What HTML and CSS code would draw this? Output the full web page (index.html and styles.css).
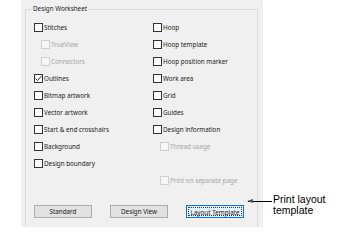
FILE: index.html
```html
<!DOCTYPE html>
<html lang="en">
<head>
  <meta charset="UTF-8">
  <title>Design Worksheet</title>
  <link rel="stylesheet" href="styles.css">
</head>
<body>

  <div class="page">
    <div class="panel">
      <fieldset class="group">
        <legend>Design Worksheet</legend>

        <div class="options">
          <div class="col">
            <label class="opt"><span class="box"></span>Stitches</label>
            <label class="opt sub off"><span class="box"></span>TrueView</label>
            <label class="opt sub off"><span class="box"></span>Connectors</label>
            <label class="opt"><span class="box checked"><svg viewBox="0 0 9 9" width="9" height="9"><path d="M1.5 4.5 L3.6 6.6 L7.6 1.8" fill="none" stroke="#333" stroke-width="1"/></svg></span>Outlines</label>
            <label class="opt"><span class="box"></span>Bitmap artwork</label>
            <label class="opt"><span class="box"></span>Vector artwork</label>
            <label class="opt"><span class="box"></span>Start &amp; end crosshairs</label>
            <label class="opt"><span class="box"></span>Background</label>
            <label class="opt"><span class="box"></span>Design boundary</label>
          </div>
          <div class="col">
            <label class="opt"><span class="box"></span>Hoop</label>
            <label class="opt"><span class="box"></span>Hoop template</label>
            <label class="opt"><span class="box"></span>Hoop position marker</label>
            <label class="opt"><span class="box"></span>Work area</label>
            <label class="opt"><span class="box"></span>Grid</label>
            <label class="opt"><span class="box"></span>Guides</label>
            <label class="opt"><span class="box"></span>Design information</label>
            <label class="opt sub off"><span class="box"></span>Thread usage</label>
            <label class="opt empty"></label>
            <label class="opt sub off"><span class="box"></span>Print on separate page</label>
          </div>
        </div>

        <div class="buttons">
          <button class="btn">Standard</button>
          <button class="btn">Design View</button>
          <button class="btn focus"><span>Layout Template</span></button>
        </div>
      </fieldset>
    </div>

    <div class="callout">
      <span class="arrow"></span>
      <span class="note">Print layout<br>template</span>
    </div>
  </div>

</body>
</html>
```

FILE: styles.css
```css
body {
  margin: 0;
  background: #fff;
  font-family: "Noto Sans", "Liberation Sans", sans-serif;
  color: #222;
}

.page {
  display: flex;
  align-items: flex-start;
  padding-left: 21px;
}

.panel {
  width: 242px;
  height: 227px;
  background: #f0f0f0;
  overflow: hidden;
  padding: 6px 5px 0 4px;
  box-sizing: border-box;
}

.group {
  margin: 0;
  padding: 0 0 0 8px;
  height: 260px;
  border: 1px solid #dcdcdc;
  box-sizing: border-box;
}

.group legend {
  font-size: 6.3px;
  padding: 0 1px;
  margin-left: -2px;
  line-height: 6px;
  color: #222;
}

.options {
  display: flex;
  margin-top: 7px;
}

.col {
  display: flex;
  flex-direction: column;
}

.col:first-child {
  width: 119px;
}

.opt {
  display: flex;
  align-items: center;
  height: 17px;
  font-size: 6.3px;
  white-space: nowrap;
}

.opt.sub {
  padding-left: 7px;
}

.opt.off {
  color: #a6a6a6;
}

.box {
  width: 9px;
  height: 9px;
  border: 1px solid #333;
  background: #fff;
  box-sizing: border-box;
  margin-right: 1px;
  display: inline-flex;
  flex: none;
}

.box svg {
  margin: -1px;
}

.off .box {
  border-color: #cfcfcf;
  background: #f7f7f7;
}

.buttons {
  display: flex;
  gap: 18px;
  margin-top: 16px;
}

.btn {
  width: 58px;
  height: 13px;
  padding: 0;
  font-family: inherit;
  font-size: 6.3px;
  white-space: nowrap;
  color: #222;
  background: #e1e1e1;
  border: 1px solid #adadad;
}

.btn.focus {
  background: #e5f1fb;
  border-color: #0078d7;
  padding: 1px;
}

.btn.focus span {
  display: block;
  height: 100%;
  line-height: 9px;
  border: 1px dotted #333;
  box-sizing: border-box;
}

.callout {
  display: flex;
  align-items: flex-start;
  margin-top: 194px;
  margin-left: -15px;
}

.arrow {
  position: relative;
  width: 24px;
  height: 1px;
  margin-top: 7px;
  background: #000;
}

.arrow::before {
  content: "";
  position: absolute;
  left: -1px;
  top: -2px;
  border-right: 6px solid #555;
  border-top: 2.5px solid transparent;
  border-bottom: 2.5px solid transparent;
}

.note {
  font-family: "Liberation Sans", Arial, sans-serif;
  font-size: 10.5px;
  line-height: 11px;
  color: #000;
  margin-left: 1px;
}
```
